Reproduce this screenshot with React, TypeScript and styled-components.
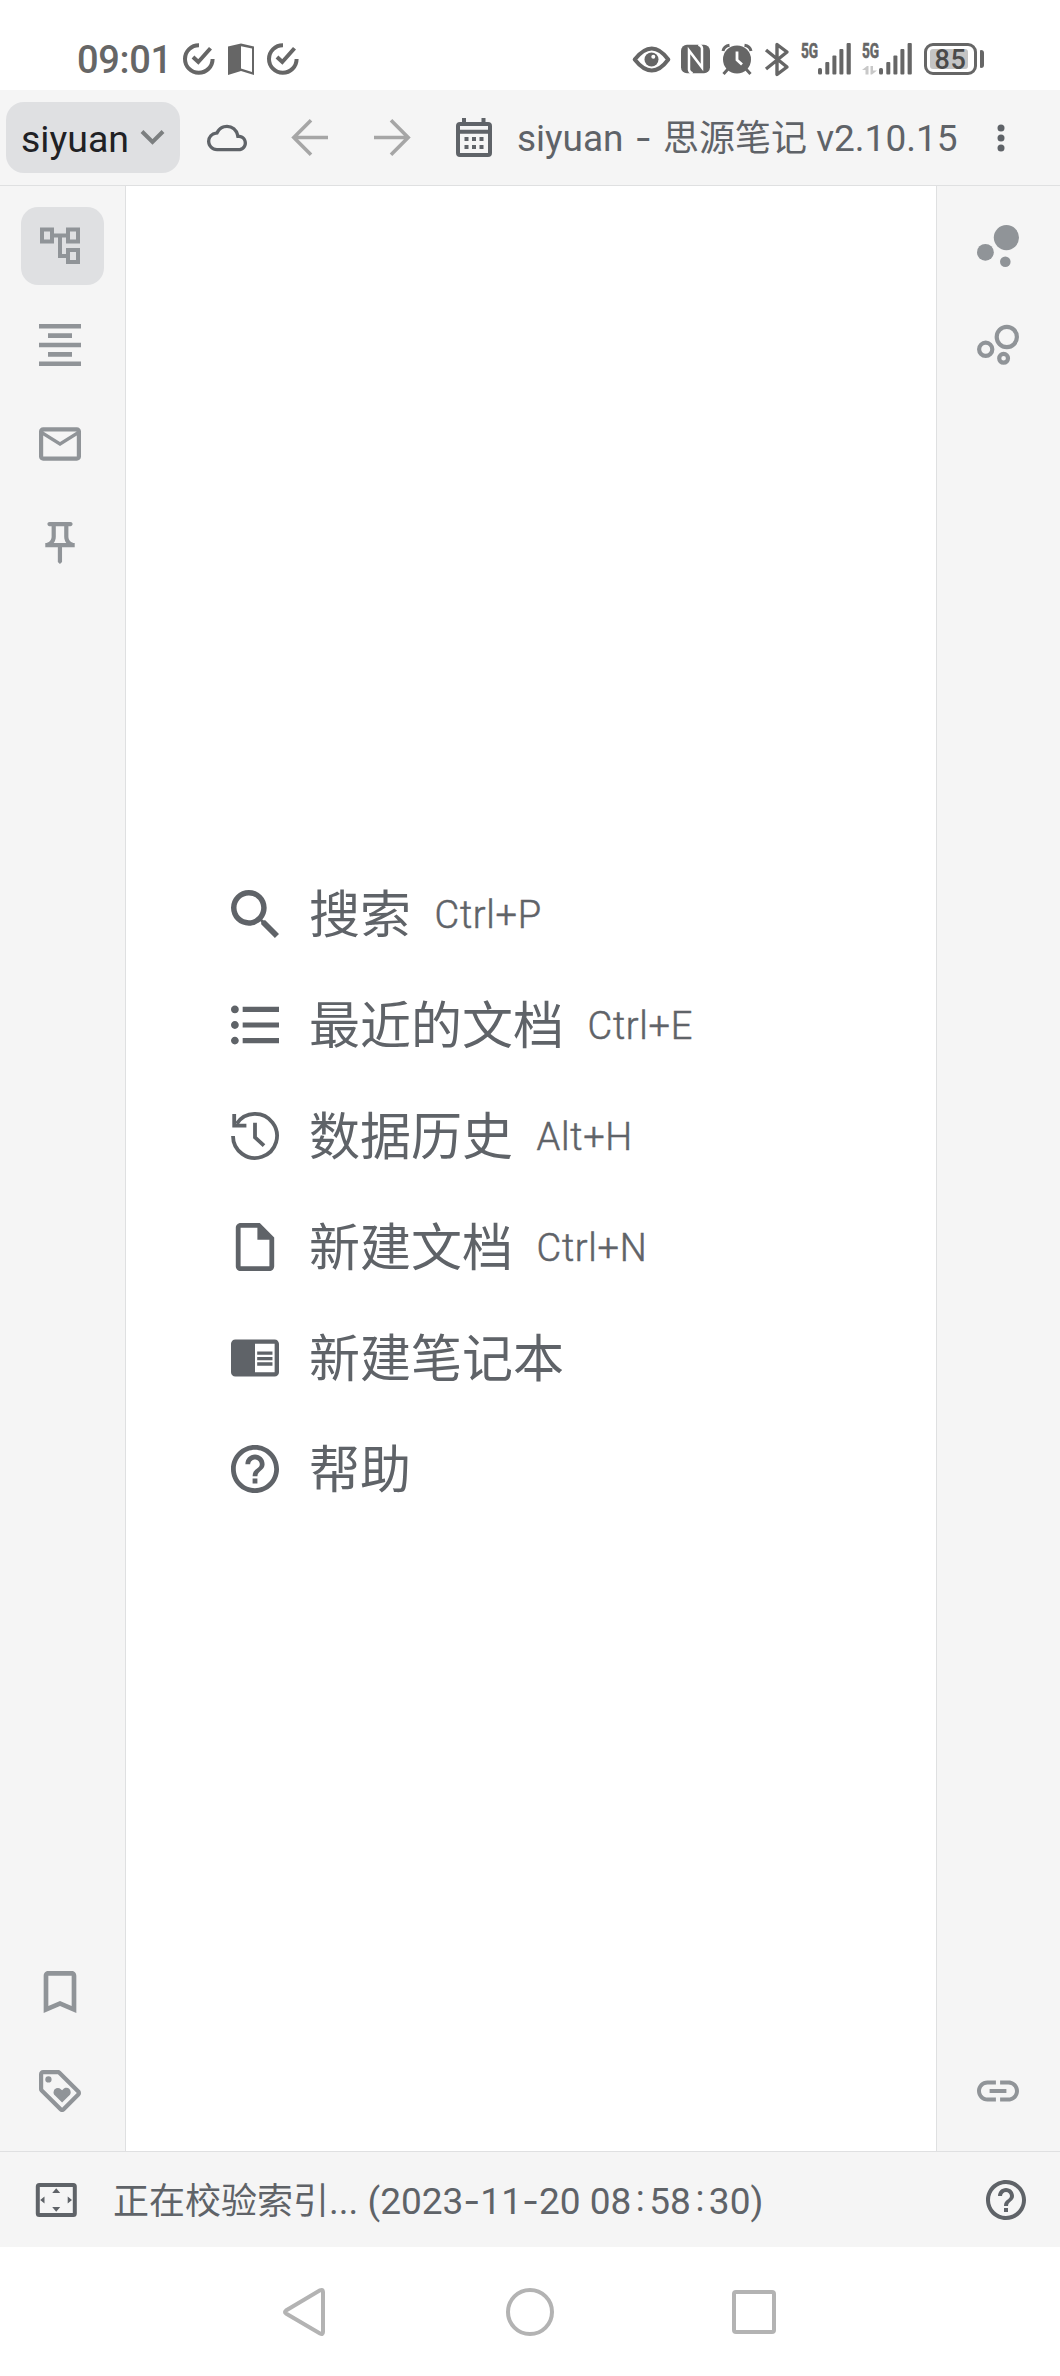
import React from "react";
import styled, { createGlobalStyle } from "styled-components";

const color = {
  surface: "#f5f5f5",
  line: "#dfe0e1",
  active: "#dfe0e2",
  text: "#5f6368",
  dock: "#909498",
  strong: "#202124",
  faint: "#a6a6a6",
  status: "#666666",
  nav: "#b3b3b3",
};

const GlobalStyle = createGlobalStyle`
  body { margin: 0; background: #fff; }
  * { box-sizing: border-box; }
  svg { display: block; flex: none; overflow: visible; }
`;

const Screen = styled.div`
  width: 1060px;
  height: 2376px;
  display: flex;
  flex-direction: column;
  background: #fff;
  color: ${color.text};
  font-family: Roboto, "Noto Sans CJK SC", sans-serif;
  font-size: 37px;
  white-space: nowrap;
  overflow: hidden;
`;

const StatusBar = styled.header`
  height: 90px;
  flex: none;
  display: flex;
  align-items: center;
  justify-content: space-between;
  padding: 28px 76px 0 77px;
  color: ${color.status};
`;

const StatusGroup = styled.div`
  display: flex;
  align-items: center;
  height: 34px;
`;

const Clock = styled.span`
  width: 106px;
  padding-top: 1px;
  font-size: 38px;
  font-weight: 500;
  line-height: 34px;
  letter-spacing: -0.3px;
`;

const Drawing = styled.svg<{ $gap?: number }>`
  margin-left: ${(p) => p.$gap ?? 0}px;
`;

const Signal = styled.div<{ $gap: number }>`
  display: flex;
  height: 32px;
  margin-left: ${(p) => p.$gap}px;
`;

const Network = styled.div`
  width: 17px;
  display: flex;
  flex-direction: column;
  justify-content: space-between;
  font: 700 20px/17px "Roboto", sans-serif;
`;

const NetworkName = styled.span`
  display: block;
  transform: scaleX(0.68);
  transform-origin: 0 0;
  -webkit-text-stroke: 0.6px currentColor;
`;

const Battery = styled.div`
  width: 53px;
  height: 32px;
  margin-left: 12px;
  padding: 3px;
  border: 3px solid ${color.status};
  border-radius: 9px;
  display: flex;
`;

const BatteryLevel = styled.span`
  width: 38px;
  height: 20px;
  padding-left: 3px;
  border-radius: 3px;
  background: #c4c4c4;
  color: #4a4a4a;
  font: 500 27px/22px Roboto, sans-serif;
  letter-spacing: 0.6px;
  text-align: center;
`;

const BatteryTip = styled.span`
  width: 4px;
  height: 18px;
  margin-left: 3px;
  border-radius: 1px 3px 3px 1px;
  background: ${color.status};
`;

const Toolbar = styled.nav`
  height: 96px;
  flex: none;
  display: flex;
  align-items: center;
  padding: 0 55px 0 6px;
  background: ${color.surface};
  border-bottom: 1px solid ${color.line};
`;

const Workspace = styled.button`
  width: 174px;
  height: 71px;
  padding: 2px 15px 0 15px;
  border: 0;
  border-radius: 18px;
  display: flex;
  align-items: center;
  justify-content: space-between;
  background: ${color.active};
  color: ${color.strong};
  font: 400 37.5px/44px Roboto, sans-serif;
`;

const Title = styled.h1`
  margin: 2px 0 0 25px;
  width: 480px;
  font-weight: 400;
  font-size: 37px;
  line-height: 44px;
`;

const Cjk = styled.span`
  font-family: "Noto Sans CJK SC", sans-serif;
  font-size: 36px;
  line-height: 1;
`;

const Dash = styled.span<{ $wide?: boolean }>`
  padding: 0 ${(p) => (p.$wide ? 2 : 0)}px;
  font-family: Inter, sans-serif;
`;

const Colon = styled.span`
  position: relative;
  top: -3px;
  padding: 0 4.5px;
`;

const Body = styled.div`
  flex: 1;
  min-height: 0;
  display: flex;
`;

const Dock = styled.aside<{ $side: "left" | "right" }>`
  width: ${(p) => (p.$side === "left" ? 126 : 124)}px;
  flex: none;
  display: flex;
  flex-direction: column;
  justify-content: space-between;
  padding: 21px 21px 21px ${(p) => (p.$side === "left" ? 21 : 22)}px;
  background: ${color.surface};
  border: 0 solid ${color.line};
  border-${(p) => (p.$side === "left" ? "right" : "left")}-width: 1px;
  color: ${color.dock};
`;

const DockGroup = styled.div`
  display: flex;
  flex-direction: column;
  gap: 21px;
`;

const DockItem = styled.div<{ $active?: boolean }>`
  width: 83px;
  height: 78px;
  padding-left: 18px;
  border-radius: 17px;
  display: flex;
  align-items: center;
  background: ${(p) => (p.$active ? color.active : "transparent")};
`;

const Main = styled.main`
  flex: 1;
  display: flex;
  align-items: center;
  padding: 46px 0 0 105px;
`;

const Menu = styled.ul`
  margin: 0;
  padding: 0;
  list-style: none;
`;

const MenuItem = styled.li`
  height: 111px;
  display: flex;
  align-items: center;
`;

const MenuLabel = styled.span`
  margin-left: 30px;
  padding-bottom: 7px;
  font: 400 51px/72px "Noto Sans CJK SC", sans-serif;
`;

const Shortcut = styled.kbd`
  margin-left: 23.5px;
  padding-top: 2px;
  font: 300 38px/44px Roboto, sans-serif;
  letter-spacing: 0.7px;
  -webkit-text-stroke: 0.5px currentColor;
`;

const Footer = styled.footer`
  height: 96px;
  flex: none;
  display: flex;
  align-items: center;
  padding: 0 34px 0 36px;
  background: ${color.surface};
  border-top: 1px solid ${color.line};
`;

const Message = styled.span`
  flex: 1;
  margin-left: 36px;
  padding-top: 4px;
  line-height: 44px;
`;

const NavBar = styled.div`
  height: 129px;
  flex: none;
  display: flex;
  align-items: center;
  padding-left: 283px;
  color: ${color.nav};
`;

type IconProps = {
  size: number;
  box?: string;
  height?: number;
  gap?: number;
  tint?: string;
  children: React.ReactNode;
};

const Icon = ({ size, height, box = "2 2 20 20", gap, tint = "currentColor", children }: IconProps) => (
  <Drawing width={size} height={height ?? size} viewBox={box} fill={tint} $gap={gap}>
    {children}
  </Drawing>
);

const CheckIcon = ({ gap }: { gap?: number }) => (
  <Icon size={32} box="183 43 32 32" gap={gap}>
    <path
      d="M199 45.2A13.8 13.8 0 1 0 212.6 59M193 57L198.3 62L210.5 48.2"
      fill="none"
      stroke="currentColor"
      strokeWidth="4"
    />
  </Icon>
);

const SignalBars = () => (
  <Icon size={33} height={32} box="0 0 33 32">
    <rect x="0" y="25" width="4" height="6.5" rx="1.6" />
    <rect x="7.3" y="19" width="4" height="12.5" rx="1" />
    <rect x="14.4" y="12.5" width="4" height="19" rx="1" />
    <rect x="21.4" y="6" width="4" height="25.5" rx="1" />
    <rect x="28.6" y="0" width="4.2" height="31.5" rx="1" />
  </Icon>
);

const HelpShape = () => (
  <path d="M11 18h2v-2h-2v2zm1-16C6.48 2 2 6.48 2 12s4.48 10 10 10 10-4.48 10-10S17.52 2 12 2zm0 18c-4.41 0-8-3.59-8-8s3.59-8 8-8 8 3.59 8 8-3.59 8-8 8zm0-14c-2.21 0-4 1.79-4 4h2c0-1.1.9-2 2-2s2 .9 2 2c0 2-3 1.75-3 5h2c0-2.25 3-2.5 3-5 0-2.21-1.79-4-4-4z" />
);

const menu = [
  {
    label: "搜索",
    keys: "Ctrl+P",
    box: "3 3 17.49 17.49",
    shape: (
      <path d="M15.5 14h-.79l-.28-.27A6.47 6.47 0 0 0 16 9.5 6.5 6.5 0 1 0 9.5 16c1.61 0 3.09-.59 4.23-1.57l.27.28v.79l5 4.99L20.49 19l-4.99-5zm-6 0C7.01 14 5 11.99 5 9.5S7.01 5 9.5 5 14 7.01 14 9.5 11.99 14 9.5 14z" />
    ),
  },
  {
    label: "最近的文档",
    keys: "Ctrl+E",
    box: "2.5 2.75 18.5 18.5",
    shape: (
      <path d="M4 10.5c-.83 0-1.5.67-1.5 1.5s.67 1.5 1.5 1.5 1.5-.67 1.5-1.5-.67-1.5-1.5-1.5zm0-6c-.83 0-1.5.67-1.5 1.5S3.17 7.5 4 7.5 5.5 6.83 5.5 6 4.83 4.5 4 4.5zm0 12c-.83 0-1.5.68-1.5 1.5s.68 1.5 1.5 1.5 1.5-.68 1.5-1.5-.67-1.5-1.5-1.5zM7 19h14v-2H7v2zm0-6h14v-2H7v2zm0-8v2h14V5H7z" />
    ),
  },
  {
    label: "数据历史",
    keys: "Alt+H",
    box: "0 0 48 48",
    shape: (
      <path
        d="M5.8 11.6A22 22 0 1 1 2 24M3.2 2V13.7H15.4M24 10.7V25.3L33 33.6"
        fill="none"
        stroke="currentColor"
        strokeWidth="3.8"
      />
    ),
  },
  {
    label: "新建文档",
    keys: "Ctrl+N",
    box: "2 2 20 20",
    shape: <path d="M14 2H6c-1.1 0-2 .9-2 2v16c0 1.1.9 2 2 2h12c1.1 0 2-.9 2-2V8l-6-6zM6 20V4h7v5h5v11H6z" />,
  },
  {
    label: "新建笔记本",
    box: "1 1.5 22 22",
    shape: (
      <path d="M13 12h7v1.5h-7zm0-2.5h7V11h-7zm0 5h7V16h-7zM21 4H3c-1.1 0-2 .9-2 2v13c0 1.1.9 2 2 2h18c1.1 0 2-.9 2-2V6c0-1.1-.9-2-2-2zm0 15h-9V6h9v13z" />
    ),
  },
  { label: "帮助", box: "2 2 20 20", shape: <HelpShape /> },
];

export default function App() {
  return (
    <Screen>
      <GlobalStyle />
      <StatusBar>
        <StatusGroup>
          <Clock>09:01</Clock>
          <CheckIcon />
          <Icon size={26} height={32} box="228 43 26 32" gap={13}>
            <path
              fillRule="evenodd"
              d="M228 46.5L241 43.5L254 46.5V75L241 71L228 75ZM241 46.3V68.6L252 72V48.5Z"
            />
          </Icon>
          <CheckIcon gap={13} />
        </StatusGroup>
        <StatusGroup>
          <Icon size={38} height={32} box="633 43 38 32">
            <path
              d="M634.7 59.5Q652 37.5 668.3 59.5Q652 81.5 634.7 59.5Z"
              fill="none"
              stroke="currentColor"
              strokeWidth="4"
              strokeLinejoin="round"
            />
            <circle cx="651.5" cy="59.5" r="7" />
            <circle cx="653.3" cy="56.7" r="2" fill="#fff" />
          </Icon>
          <Icon size={29} height={32} box="681 43 29 32" gap={10}>
            <rect x="681" y="44.7" width="29" height="28.5" rx="6" />
            <path
              d="M689 70V50.5L702 67.5V48M689 69.5Q689 72 692.5 73.5M702 48.5Q702 46 698.5 44.5"
              fill="none"
              stroke="#fff"
              strokeWidth="2.5"
            />
          </Icon>
          <Icon size={32} box="721 43 32 32" gap={11}>
            <circle cx="737" cy="59.5" r="14" />
            <path
              d="M723 51Q724 46 729.5 45.2M751 51Q750 46 744.5 45.2M728 69L723.5 74M746 69L750.5 74"
              fill="none"
              stroke="currentColor"
              strokeWidth="3"
            />
            <path d="M737 51.5V60L742 64.5" fill="none" stroke="#fff" strokeWidth="2.8" />
          </Icon>
          <Icon size={24} height={34} box="765 42 24 34" gap={12}>
            <path
              d="M766 50L787 67L777 74.5V44.5L787 52L766 69"
              fill="none"
              stroke="currentColor"
              strokeWidth="3.4"
              strokeLinejoin="round"
            />
          </Icon>
          <Signal $gap={12}>
            <Network>
              <NetworkName>5G</NetworkName>
            </Network>
            <SignalBars />
          </Signal>
          <Signal $gap={11}>
            <Network>
              <NetworkName>5G</NetworkName>
              <Icon size={15} height={9} box="0 0 15 9" tint="#c8c8c8">
                <path d="M0 4L5 0H6.5V8.5H3.5V4ZM8.5 0H11V4.5H15L10 8.5H8.5Z" />
              </Icon>
            </Network>
            <SignalBars />
          </Signal>
          <Battery>
            <BatteryLevel>85</BatteryLevel>
          </Battery>
          <BatteryTip />
        </StatusGroup>
      </StatusBar>

      <Toolbar>
        <Workspace>
          siyuan
          <Icon size={24} height={16} box="142 131 24 16">
            <path d="M143 131.5L153.5 142L164 131.5" fill="none" stroke="#7c7f80" strokeWidth="4" />
          </Icon>
        </Workspace>
        <Icon size={40} box="0 0 24 24" gap={27}>
          <path d="M12 6c2.62 0 4.88 1.86 5.39 4.43l.3 1.5 1.53.11A2.98 2.98 0 0 1 22 15c0 1.65-1.35 3-3 3H6c-2.21 0-4-1.79-4-4 0-2.05 1.53-3.76 3.56-3.97l1.07-.11.5-.95A5.469 5.469 0 0 1 12 6m0-2C9.11 4 6.6 5.64 5.35 8.04A5.994 5.994 0 0 0 0 14c0 3.31 2.69 6 6 6h13c2.76 0 5-2.24 5-5 0-2.64-2.05-4.78-4.65-4.96A7.49 7.49 0 0 0 12 4z" />
        </Icon>
        <Icon size={37} box="0 0 37 37" gap={44}>
          <path d="M37 18.5H3M20 1.3L2.8 18.5L20 35.7" fill="none" stroke={color.faint} strokeWidth="3.6" />
        </Icon>
        <Icon size={37} box="0 0 37 37" gap={46}>
          <path d="M0 18.5H34M17 1.3L34.2 18.5L17 35.7" fill="none" stroke={color.faint} strokeWidth="3.6" />
        </Icon>
        <Icon size={36} height={39} box="456.5 118 36 39" gap={45}>
          <path
            fillRule="evenodd"
            d="M462.5 118h4v4h15.5v-4h4v4h2.5q4 0 4 4v27q0 4-4 4h-28q-4 0-4-4v-27q0-4 4-4h2zM460.5 126v3.7h28V126zM460.5 133.7v19.3h28V133.7z"
          />
          <path d="M465 137h4v4h-4zM472.5 137h4v4h-4zM480 137h4v4h-4zM465 145h4v4h-4zM472.5 145h4v4h-4zM480 145h4v4h-4z" />
        </Icon>
        <Title>
          siyuan <Dash $wide>-</Dash> <Cjk>思源笔记</Cjk> v2.10.15
        </Title>
        <Icon size={8} height={28} box="0 0 8 28">
          <circle cx="4" cy="4" r="3.5" />
          <circle cx="4" cy="14" r="3.5" />
          <circle cx="4" cy="24" r="3.5" />
        </Icon>
      </Toolbar>

      <Body>
        <Dock $side="left">
          <DockGroup>
            <DockItem $active>
              <Icon size={42} box="0 0 42 42">
                <path
                  d="M3 4.5h10v12H3zM29 4.5h10v12H29zM29 25h10v12H29zM15 10.5H27M21 10.5V31H27"
                  fill="none"
                  stroke="currentColor"
                  strokeWidth="4"
                />
              </Icon>
            </DockItem>
            <DockItem>
              <Icon size={42} box="0 0 42 42">
                <path d="M0 0h42v4.6H0zM9 9.3h24v4.7H9zM0 18.7h42v4.6H0zM9 28h24v4.7H9zM0 37.4h42V42H0z" />
              </Icon>
            </DockItem>
            <DockItem>
              <Icon size={42}>
                <path d="M20 4H4c-1.1 0-2 .9-2 2v12c0 1.1.9 2 2 2h16c1.1 0 2-.9 2-2V6c0-1.1-.9-2-2-2zm0 14H4V8l8 5 8-5v10zm-8-7L4 6h16l-8 5z" />
              </Icon>
            </DockItem>
            <DockItem>
              <Icon size={42}>
                <path d="M14 4v5c0 1.12.37 2.16 1 3H9c.65-.86 1-1.9 1-3V4h4m3-2H7c-.55 0-1 .45-1 1s.45 1 1 1h1v5c0 1.66-1.34 3-3 3v2h5.97v7l1 1 1-1v-7H19v-2c-1.66 0-3-1.34-3-3V4h1c.55 0 1-.45 1-1s-.45-1-1-1z" />
              </Icon>
            </DockItem>
          </DockGroup>
          <DockGroup>
            <DockItem>
              <Icon size={42} box="3 3 18 18">
                <path d="M17 3H7c-1.1 0-2 .9-2 2v16l7-3 7 3V5c0-1.1-.9-2-2-2zm0 15l-5-2.18L7 18V5h10v13z" />
              </Icon>
            </DockItem>
            <DockItem>
              <Icon size={42}>
                <path d="M21.41 11.58l-9-9C12.05 2.22 11.55 2 11 2H4c-1.1 0-2 .9-2 2v7c0 .55.22 1.05.59 1.42l9 9c.36.36.86.58 1.41.58s1.05-.22 1.41-.59l7-7c.37-.36.59-.86.59-1.41s-.23-1.06-.59-1.42zM13 20.01L4 11V4h7v-.01l9 9-7 7.02z" />
                <circle cx="6.5" cy="6.5" r="1.5" />
                <path d="M8.9 12.55c0 .57.23 1.07.6 1.45l3.5 3.5 3.5-3.5c.37-.37.6-.89.6-1.45 0-1.13-.92-2.05-2.05-2.05-.57 0-1.08.23-1.45.6l-.6.6-.6-.59a2.074 2.074 0 0 0-3.5 1.44z" />
              </Icon>
            </DockItem>
          </DockGroup>
        </Dock>

        <Main>
          <Menu>
            {menu.map((item) => (
              <MenuItem key={item.label}>
                <Icon size={48} box={item.box}>
                  {item.shape}
                </Icon>
                <MenuLabel>{item.label}</MenuLabel>
                {item.keys && <Shortcut>{item.keys}</Shortcut>}
              </MenuItem>
            ))}
          </Menu>
        </Main>

        <Dock $side="right">
          <DockGroup>
            <DockItem>
              <Icon size={42} box="0 0 42 42">
                <circle cx="29.4" cy="12.6" r="12.6" />
                <circle cx="8.4" cy="27.3" r="8.4" />
                <circle cx="28.3" cy="36.7" r="5.3" />
              </Icon>
            </DockItem>
            <DockItem>
              <Icon size={42} box="0 0 42 42">
                <g fill="none" stroke="currentColor" strokeWidth="4.2">
                  <circle cx="29.8" cy="13" r="10.1" />
                  <circle cx="8.7" cy="25.3" r="6.6" />
                  <circle cx="26.6" cy="34.3" r="4.4" />
                </g>
              </Icon>
            </DockItem>
          </DockGroup>
          <DockGroup>
            <DockItem>
              <Icon size={42}>
                <path d="M3.9 12c0-1.71 1.39-3.1 3.1-3.1h4V7H7c-2.76 0-5 2.24-5 5s2.24 5 5 5h4v-1.9H7c-1.71 0-3.1-1.39-3.1-3.1zM8 13h8v-2H8v2zm9-6h-4v1.9h4c1.71 0 3.1 1.39 3.1 3.1s-1.39 3.1-3.1 3.1h-4V17h4c2.76 0 5-2.24 5-5s-2.24-5-5-5z" />
              </Icon>
            </DockItem>
          </DockGroup>
        </Dock>
      </Body>

      <Footer>
        <Icon size={41} height={34} box="36.5 2183 41 34">
          <rect
            x="38.3"
            y="2185"
            width="37"
            height="30"
            rx="1.5"
            fill="none"
            stroke="currentColor"
            strokeWidth="4"
          />
          <path d="M56.7 2188.3l4 4.7h-8zM56.7 2211.7l4-4.7h-8zM40.7 2200l4.3-3.5v7zM72.5 2200l-4.3-3.5v7z" />
        </Icon>
        <Message>
          <Cjk>正在校验索引</Cjk>... (2023<Dash>-</Dash>11<Dash>-</Dash>20 08<Colon>:</Colon>58<Colon>:</Colon>30)
        </Message>
        <Icon size={40}>
          <HelpShape />
        </Icon>
      </Footer>

      <NavBar>
        <Icon size={42} height={48} box="283 2288 42 48">
          <path
            d="M323 2292V2332Q323 2335 320 2333.5L286 2313.5Q284 2312 286 2310.5L320 2290.3Q323 2289 323 2292Z"
            fill="none"
            stroke="currentColor"
            strokeWidth="4"
          />
        </Icon>
        <Icon size={48} box="0 0 48 48" gap={181}>
          <circle cx="24" cy="24" r="22" fill="none" stroke="currentColor" strokeWidth="4" />
        </Icon>
        <Icon size={44} box="0 0 44 44" gap={178}>
          <rect x="2" y="2" width="40" height="40" rx="2" fill="none" stroke="currentColor" strokeWidth="4" />
        </Icon>
      </NavBar>
    </Screen>
  );
}
